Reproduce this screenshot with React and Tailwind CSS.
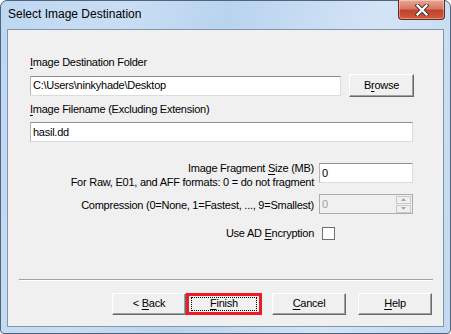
import React from "react";

const ui = { fontFamily: '"Liberation Sans", Arial, sans-serif' };

function U({ children }) {
  return <span className="underline underline-offset-[2px] decoration-[1px]">{children}</span>;
}

function Btn({ children, size = "h-[22px] w-[74px]", className = "" }) {
  return (
    <div
      className={`${size} flex items-center justify-center bg-[#f0f0f0] border border-t-white border-l-white border-r-[#696969] border-b-[#696969] shadow-[inset_-1px_-1px_0_#a0a0a0] text-[11px] tracking-[-0.25px] text-black ${className}`}
    >
      <span className="-mt-[1px]">{children}</span>
    </div>
  );
}

function TextBox({ value, className = "" }) {
  return (
    <div
      className={`h-[20px] bg-white border border-t-[#8e8f8f] border-l-[#b5b5b5] border-r-[#dcdcdc] border-b-[#dcdcdc] flex items-center pl-[2px] text-[11px] tracking-[-0.25px] text-black ${className}`}
    >
      {value}
    </div>
  );
}

export default function App() {
  return (
    <div className="w-[451px] h-[334px] bg-white overflow-hidden" style={ui}>
      <div className="w-[451px] h-[334px] rounded-t-[7px] rounded-b-[4px] border border-[#50647c] bg-[linear-gradient(100deg,#bed7f1_0%,#c9def4_25%,#b9d3ef_45%,#d3e4f6_75%,#c2d9f1_100%)] flex flex-col">
        {/* Title bar */}
        <div className="h-[28px] flex items-start justify-between pl-[7px] pr-[5px]">
          <span className="mt-[6px] text-[12px] leading-[15px] text-black">Select Image Destination</span>
          <div className="-mt-[1px] w-[47px] h-[20px] rounded-b-[4px] border border-t-0 border-[#6b2a1e] bg-[linear-gradient(180deg,#e9a795_0%,#d87a63_45%,#c2432b_55%,#cf5a3e_100%)] flex items-center justify-center shadow-[inset_0_0_0_1px_rgba(255,255,255,0.35)]">
            <svg width="14" height="12" viewBox="0 0 14 12">
              <path d="M2.5 1.5 L11.5 10.5 M11.5 1.5 L2.5 10.5" stroke="#4a3a36" strokeWidth="4.2" strokeLinecap="square" />
              <path d="M2.5 1.5 L11.5 10.5 M11.5 1.5 L2.5 10.5" stroke="#ffffff" strokeWidth="2.2" strokeLinecap="square" />
            </svg>
          </div>
        </div>

        {/* Client area */}
        <div className="mx-[6px] mb-[6px] flex-1 border border-[#8395ab] bg-[#f0f0f0] flex flex-col pt-[26px] text-[11px] tracking-[-0.25px] text-black">
          <div className="pl-[22px] leading-[13px]">
            <U>I</U>mage Destination Folder
          </div>
          <div className="mt-[5px] pl-[22px] flex items-center">
            <TextBox value="C:\Users\ninkyhade\Desktop" className="w-[311px]" />
            <Btn size="w-[65px] h-[23px]" className="ml-[8px]">
              B<U>r</U>owse
            </Btn>
          </div>

          <div className="mt-[6px] pl-[22px] leading-[13px]">
            <U>I</U>mage Filename (Excluding Extension)
          </div>
          <div className="mt-[6px] pl-[22px]">
            <TextBox value="hasil.dd" className="w-[383px]" />
          </div>

          <div className="mt-[19px] pl-[22px] flex items-start">
            <div className="w-[284px] text-right leading-[14px]">
              <div>
                Image Fragment <U>S</U>ize (MB)
              </div>
              <div>For Raw, E01, and AFF formats: 0 = do not fragment</div>
            </div>
            <TextBox value="0" className="ml-[5px] mt-[2px] w-[94px]" />
          </div>

          <div className="mt-[5px] pl-[22px] flex items-center">
            <div className="w-[284px] text-right leading-[13px] pt-[2px]">
              Compression (0=None, 1=Fastest, ..., 9=Smallest)
            </div>
            <div className="ml-[5px] w-[94px] h-[20px] bg-[#f0f0f0] border border-[#adadad] flex items-center justify-between pl-[2px] pr-[1px]">
              <span className="text-[#a0a0a0]">0</span>
              <div className="flex flex-col gap-[1px]">
                <div className="w-[15px] h-[8px] bg-[#f0f0f0] border border-[#c9c9c9] flex items-center justify-center">
                  <svg width="5" height="3" viewBox="0 0 5 3"><path d="M0 3 L2.5 0 L5 3 Z" fill="#a8a8a8" /></svg>
                </div>
                <div className="w-[15px] h-[8px] bg-[#f0f0f0] border border-[#c9c9c9] flex items-center justify-center">
                  <svg width="5" height="3" viewBox="0 0 5 3"><path d="M0 0 L2.5 3 L5 0 Z" fill="#a8a8a8" /></svg>
                </div>
              </div>
            </div>
          </div>

          <div className="mt-[13px] pl-[22px] flex items-center">
            <div className="w-[284px] text-right leading-[13px]">
              Use AD <U>E</U>ncryption
            </div>
            <div className="ml-[8px] w-[13px] h-[13px] bg-white border border-[#707070]" />
          </div>

          <div className="mt-[39px] ml-[11px] mr-[10px] h-[2px] border-t border-t-[#a0a0a0] border-b border-b-white" />

          <div className="mt-[12px] pl-[104px] flex items-start">
            <Btn>
              &lt; <U>B</U>ack
            </Btn>
            <div className="w-[76px] h-[22px] border-[3px] border-[#ed1c24] bg-[#f0f0f0] flex items-center justify-center">
              <div className="w-[66px] h-[14px] border border-dotted border-black flex items-center justify-center">
                <span className="-mt-[1px]">
                  <U>F</U>inish
                </span>
              </div>
            </div>
            <Btn className="ml-[10px]">
              <U>C</U>ancel
            </Btn>
            <Btn className="ml-[12px]">
              <U>H</U>elp
            </Btn>
          </div>
        </div>
      </div>
    </div>
  );
}
